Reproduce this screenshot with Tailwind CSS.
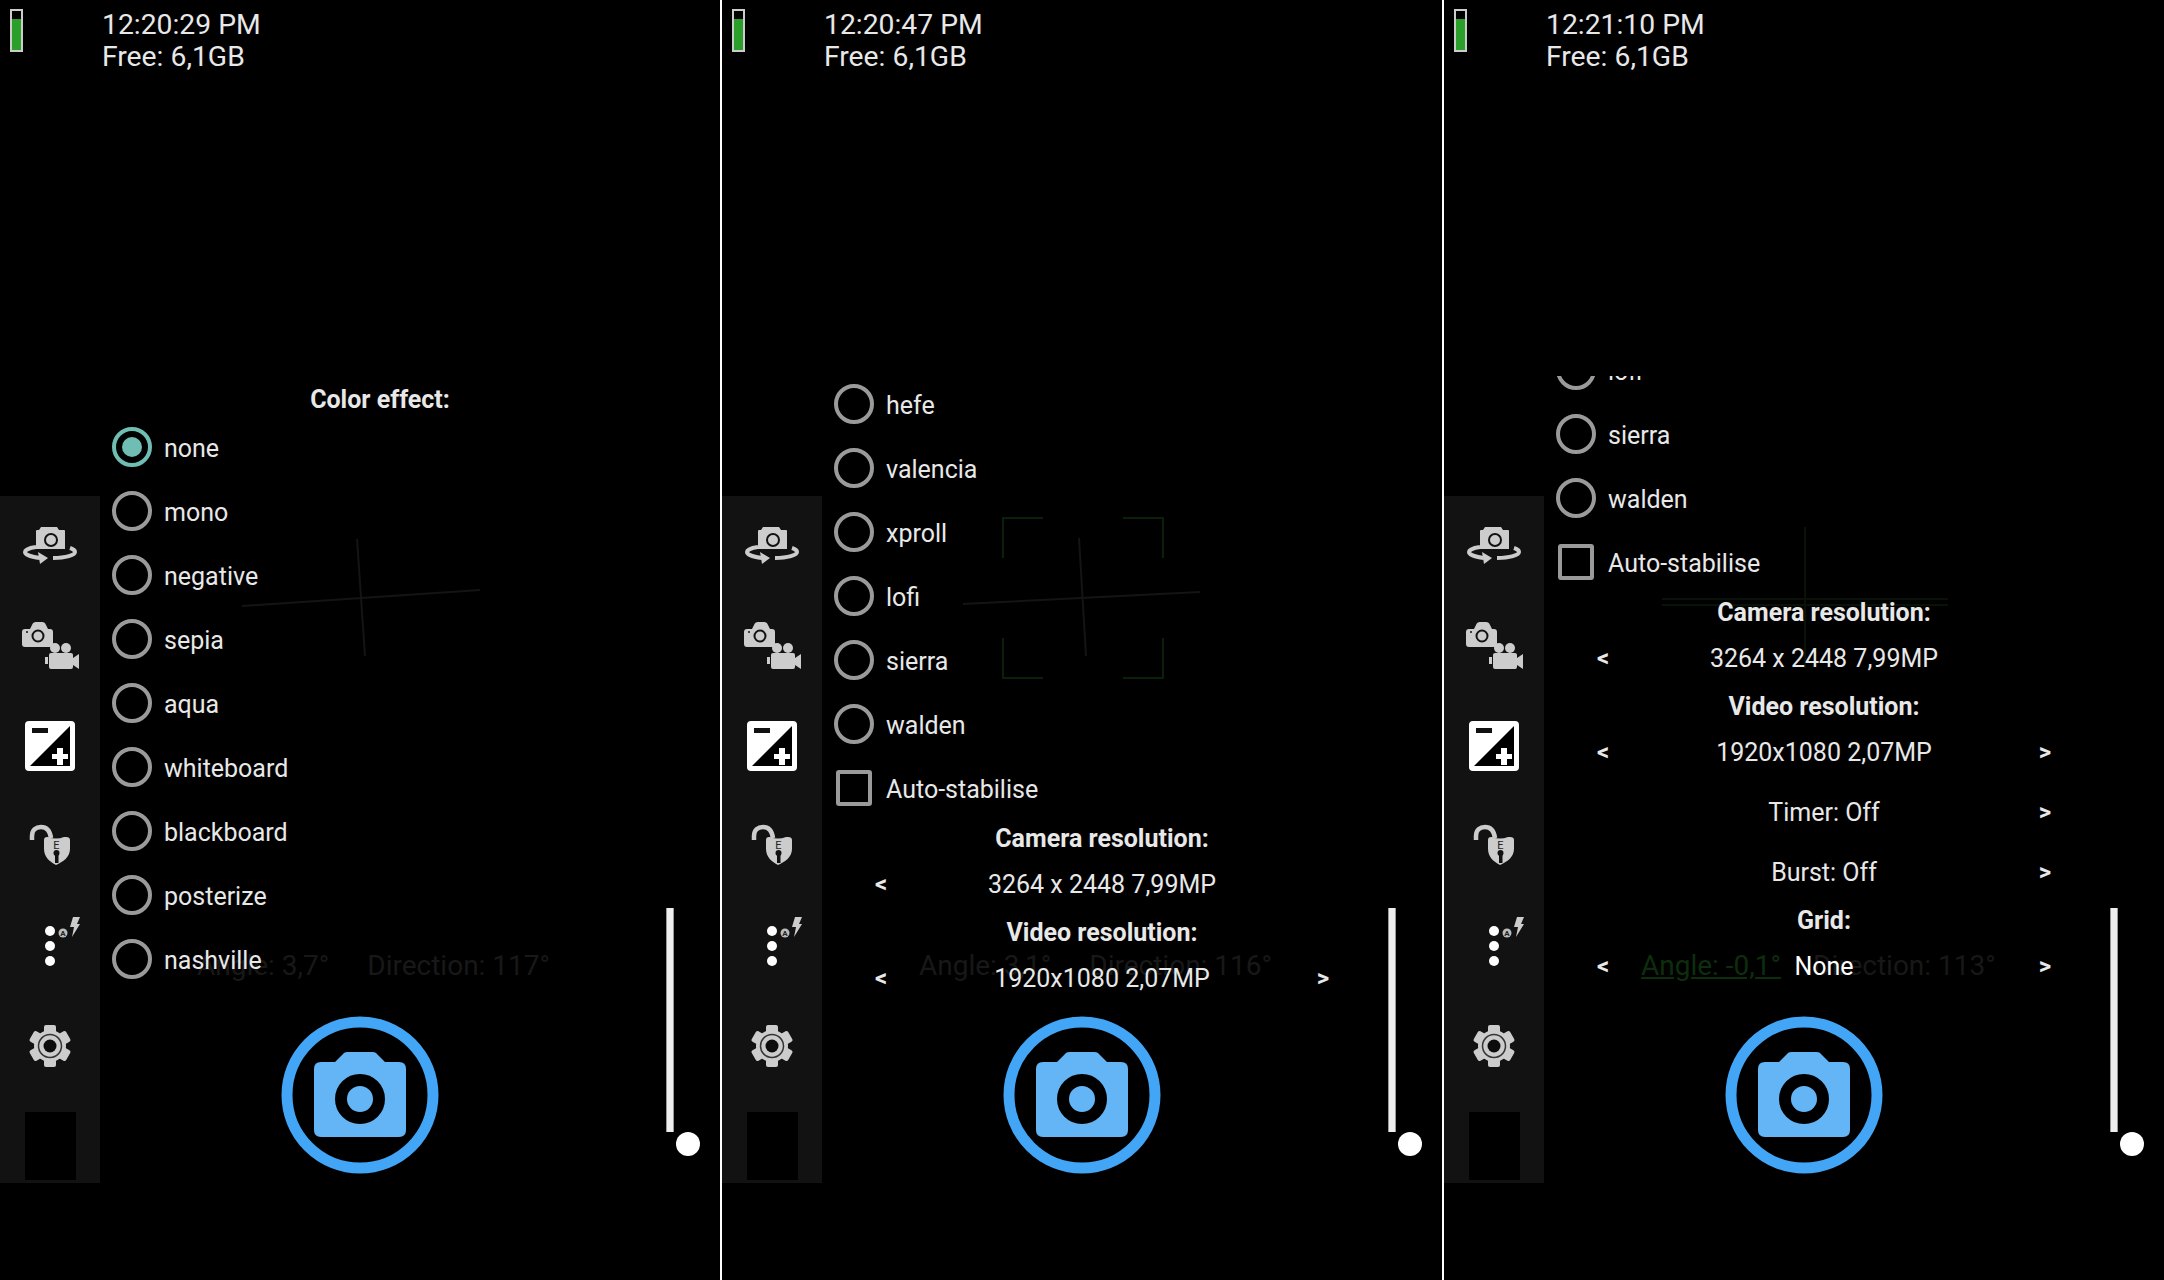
<!doctype html>
<html>
<head>
<meta charset="utf-8">
<script src="https://cdn.jsdelivr.net/npm/@tailwindcss/browser@4"></script>
</head>
<body class="bg-black">
<svg class="hidden" width="0" height="0">
  <symbol id="ic-switch" viewBox="0 0 100 100">
    <path d="M36 35q0-1 1-1h2l2-3h16l2 3h5q1 0 1 1v18H36z" fill="#ccc"/>
    <circle cx="51" cy="44" r="6" fill="#ccc" stroke="#121212" stroke-width="2"/>
    <path d="M36 51c-7 1-11 3-11 5 0 3 7 5 15 6" fill="none" stroke="#ccc" stroke-width="4"/>
    <path d="M38 56l10 6-8 6z" fill="#ccc"/>
    <path d="M53 62c13 0 22-3 22-6 0-2-2-3-5-4" fill="none" stroke="#ccc" stroke-width="4"/>
  </symbol>
  <symbol id="ic-mode" viewBox="0 0 100 100">
    <path d="M25 33h5l2-4q1-3 4-3h6q3 0 4 3l2 4h2q3 0 3 3v12q0 3-3 3H25q-3 0-3-3V36q0-3 3-3z" fill="#ccc"/>
    <circle cx="38" cy="40" r="5.500" fill="#ccc" stroke="#121212" stroke-width="2"/>
    <circle cx="27" cy="36" r="1" fill="#121212"/>
    <circle cx="55" cy="52" r="5" fill="#ccc"/>
    <circle cx="66" cy="52" r="5" fill="#ccc"/>
    <path d="M51 57h20q2 0 2 2v3l6-4v15l-6-4v2q0 2-2 2H51q-2 0-2-2V59q0-2 2-2z" fill="#ccc"/>
    <rect x="45" y="61" width="3" height="7" fill="#ccc"/>
  </symbol>
  <symbol id="ic-exposure" viewBox="0 0 100 100">
    <rect x="25" y="25" width="50" height="50" rx="4" fill="#fff"/>
    <path d="M70 30v40H30z" fill="#000"/>
    <rect x="32" y="32" width="16" height="5" fill="#111"/>
    <rect x="52" y="58" width="16" height="5" fill="#fff"/>
    <rect x="57" y="52" width="6" height="17" fill="#fff"/>
  </symbol>
  <symbol id="ic-lock" viewBox="0 0 100 100">
    <path d="M32 44v-4c0-6 4-9 9-9 6 0 9 4 10 11" fill="none" stroke="#ccc" stroke-width="4.500"/>
    <path d="M44 44q0-3 3-3h1q8 3 16 0h2q4 0 4 3v9c0 8-7 13-14 16-6-3-12-8-12-16z" fill="#ccc"/>
    <text x="56.500" y="53" text-anchor="middle" font-family="Roboto" font-size="11" fill="#222">E</text>
    <circle cx="56.500" cy="57" r="3" fill="#111"/>
    <rect x="55" y="57" width="3.500" height="10" fill="#111"/>
  </symbol>
  <symbol id="ic-more" viewBox="0 0 100 100">
    <circle cx="50" cy="35" r="5" fill="#fff"/>
    <circle cx="50" cy="50" r="5" fill="#fff"/>
    <circle cx="50" cy="65" r="5" fill="#fff"/>
    <circle cx="63" cy="37" r="4.500" fill="#bbb"/>
    <text x="63" y="40" text-anchor="middle" font-family="Roboto" font-weight="700" font-size="8" fill="#222">A</text>
    <path d="M73 21h7l-3 7h3l-8 13 2-10h-4z" fill="#ccc"/>
  </symbol>
  <symbol id="ic-gear" viewBox="0 0 100 100">
    <g fill="#ccc">
      <circle cx="50" cy="50" r="16"/>
      <rect x="44" y="29" width="12" height="42" rx="2"/>
      <rect x="44" y="29" width="12" height="42" rx="2" transform="rotate(60 50 50)"/>
      <rect x="44" y="29" width="12" height="42" rx="2" transform="rotate(120 50 50)"/>
    </g>
    <circle cx="50" cy="50" r="11.500" fill="none" stroke="#333" stroke-width="1.500"/>
    <circle cx="50" cy="50" r="6.500" fill="#0c0c0c"/>
  </symbol>
  <symbol id="ic-shutter" viewBox="0 0 158 158">
    <circle cx="79" cy="79" r="73" fill="none" stroke="#42a5f5" stroke-width="11"/>
    <path d="M40 46h14l9-9q1-1 4-1h24q3 0 4 1l9 9h14q7 0 7 7v61q0 7-7 7H40q-7 0-7-7V53q0-7 7-7z" fill="#64b5f6"/>
    <circle cx="79" cy="83" r="19" fill="#64b5f6" stroke="#000" stroke-width="12"/>
  </symbol>
</svg>

<div class="flex w-[2164px] h-[1280px] overflow-hidden [font-family:Roboto,sans-serif] text-[#e8e8e8]">

  <!-- left shot -->
  <section class="relative w-[720px] h-[1280px] shrink-0 bg-black">
    <svg class="absolute inset-0" width="720" height="1280">
      <path d="M242 606 480 590M357 539l8 117" stroke="#141414" stroke-width="2" fill="none"/>
    </svg>
    <div class="absolute left-[197px] top-[946px] flex gap-[38px] text-[28px] leading-10 text-[#181818]"><span>Angle: 3,7°</span><span>Direction: 117°</span></div>

    <header class="relative flex h-[496px] items-start">
      <div class="mt-[9px] ml-[10px] flex h-[43px] w-[13px] flex-col justify-end border-2 border-[#ccc] bg-black"><div class="h-[31px] bg-[#2aa02a]"></div></div>
      <div class="ml-[79px] mt-[9px] text-[28.3px] leading-[32px]"><p>12:20:29 PM</p><p>Free: 6,1GB</p></div>
    </header>
    <div class="relative flex h-[687px] items-start">
      <nav class="flex h-full w-[100px] flex-col bg-[#121212]">
        <svg class="size-[100px]"><use href="#ic-switch"/></svg>
        <svg class="size-[100px]"><use href="#ic-mode"/></svg>
        <svg class="size-[100px]"><use href="#ic-exposure"/></svg>
        <svg class="size-[100px]"><use href="#ic-lock"/></svg>
        <svg class="size-[100px]"><use href="#ic-more"/></svg>
        <svg class="size-[100px]"><use href="#ic-gear"/></svg>
        <div class="ml-[25px] mt-4 h-[68px] w-[51px] bg-black"></div>
      </nav>
      <svg class="ml-[181px] mt-[520px] size-[158px]"><use href="#ic-shutter"/></svg>
      <div class="ml-[227px] mt-[412px] h-[224px] w-2 border-x border-[#999] bg-[#eee]"></div>
      <div class="ml-[2px] mt-[636px] size-6 rounded-full bg-white"></div>
    </div>

    <div class="absolute left-[100px] top-[381px] w-[560px] text-[25px]">
      <h3 class="h-[34px] text-center font-bold leading-[38px]">Color effect:</h3>
      <div class="flex h-16 items-center gap-[12px] pl-3"><span class="flex size-10 items-center justify-center rounded-full border-4 border-[#6fbdb3]"><span class="size-5 rounded-full bg-[#6fbdb3]"></span></span><span class="pt-[3px]">none</span></div>
      <div class="flex h-16 items-center gap-[12px] pl-3"><span class="size-10 rounded-full border-4 border-[#9a9a9a]"></span><span class="pt-[3px]">mono</span></div>
      <div class="flex h-16 items-center gap-[12px] pl-3"><span class="size-10 rounded-full border-4 border-[#9a9a9a]"></span><span class="pt-[3px]">negative</span></div>
      <div class="flex h-16 items-center gap-[12px] pl-3"><span class="size-10 rounded-full border-4 border-[#9a9a9a]"></span><span class="pt-[3px]">sepia</span></div>
      <div class="flex h-16 items-center gap-[12px] pl-3"><span class="size-10 rounded-full border-4 border-[#9a9a9a]"></span><span class="pt-[3px]">aqua</span></div>
      <div class="flex h-16 items-center gap-[12px] pl-3"><span class="size-10 rounded-full border-4 border-[#9a9a9a]"></span><span class="pt-[3px]">whiteboard</span></div>
      <div class="flex h-16 items-center gap-[12px] pl-3"><span class="size-10 rounded-full border-4 border-[#9a9a9a]"></span><span class="pt-[3px]">blackboard</span></div>
      <div class="flex h-16 items-center gap-[12px] pl-3"><span class="size-10 rounded-full border-4 border-[#9a9a9a]"></span><span class="pt-[3px]">posterize</span></div>
      <div class="flex h-16 items-center gap-[12px] pl-3"><span class="size-10 rounded-full border-4 border-[#9a9a9a]"></span><span class="pt-[3px]">nashville</span></div>
    </div>
  </section>

  <div class="w-[2px] shrink-0 bg-white"></div>

  <!-- middle shot -->
  <section class="relative w-[720px] h-[1280px] shrink-0 bg-black">
    <svg class="absolute inset-0" width="720" height="1280">
      <path d="M241 604 478 592M357 538l7 118" stroke="#141414" stroke-width="2" fill="none"/>
      <path d="M281 558v-40h40M401 518h40v40M281 638v40h40M401 678h40v-40" stroke="#0a200a" stroke-width="2" fill="none"/>
    </svg>
    <div class="absolute left-[197px] top-[946px] flex gap-[38px] text-[28px] leading-10 text-[#181818]"><span>Angle: 3,1°</span><span>Direction: 116°</span></div>

    <header class="relative flex h-[496px] items-start">
      <div class="mt-[9px] ml-[10px] flex h-[43px] w-[13px] flex-col justify-end border-2 border-[#ccc] bg-black"><div class="h-[31px] bg-[#2aa02a]"></div></div>
      <div class="ml-[79px] mt-[9px] text-[28.3px] leading-[32px]"><p>12:20:47 PM</p><p>Free: 6,1GB</p></div>
    </header>
    <div class="relative flex h-[687px] items-start">
      <nav class="flex h-full w-[100px] flex-col bg-[#121212]">
        <svg class="size-[100px]"><use href="#ic-switch"/></svg>
        <svg class="size-[100px]"><use href="#ic-mode"/></svg>
        <svg class="size-[100px]"><use href="#ic-exposure"/></svg>
        <svg class="size-[100px]"><use href="#ic-lock"/></svg>
        <svg class="size-[100px]"><use href="#ic-more"/></svg>
        <svg class="size-[100px]"><use href="#ic-gear"/></svg>
        <div class="ml-[25px] mt-4 h-[68px] w-[51px] bg-black"></div>
      </nav>
      <svg class="ml-[181px] mt-[520px] size-[158px]"><use href="#ic-shutter"/></svg>
      <div class="ml-[227px] mt-[412px] h-[224px] w-2 border-x border-[#999] bg-[#eee]"></div>
      <div class="ml-[2px] mt-[636px] size-6 rounded-full bg-white"></div>
    </div>

    <div class="absolute left-[100px] top-[372px] w-[560px] text-[25px]">
      <div class="flex h-16 items-center gap-[12px] pl-3"><span class="size-10 rounded-full border-4 border-[#9a9a9a]"></span><span class="pt-[3px]">hefe</span></div>
      <div class="flex h-16 items-center gap-[12px] pl-3"><span class="size-10 rounded-full border-4 border-[#9a9a9a]"></span><span class="pt-[3px]">valencia</span></div>
      <div class="flex h-16 items-center gap-[12px] pl-3"><span class="size-10 rounded-full border-4 border-[#9a9a9a]"></span><span class="pt-[3px]">xproll</span></div>
      <div class="flex h-16 items-center gap-[12px] pl-3"><span class="size-10 rounded-full border-4 border-[#9a9a9a]"></span><span class="pt-[3px]">lofi</span></div>
      <div class="flex h-16 items-center gap-[12px] pl-3"><span class="size-10 rounded-full border-4 border-[#9a9a9a]"></span><span class="pt-[3px]">sierra</span></div>
      <div class="flex h-16 items-center gap-[12px] pl-3"><span class="size-10 rounded-full border-4 border-[#9a9a9a]"></span><span class="pt-[3px]">walden</span></div>
      <div class="flex h-16 items-center gap-[12px] pl-[14px]"><span class="mr-[2px] size-9 rounded-[3px] border-4 border-[#9a9a9a]"></span><span class="pt-[3px]">Auto-stabilise</span></div>
      <h3 class="h-[34px] text-center font-bold leading-[38px]">Camera resolution:</h3>
      <div class="grid h-[60px] grid-cols-[118px_324px_118px] items-center text-center"><b class="text-[24px]">&lt;</b><span class="pt-[2px]">3264 x 2448 7,99MP</span><span></span></div>
      <h3 class="h-[34px] text-center font-bold leading-[38px]">Video resolution:</h3>
      <div class="grid h-[60px] grid-cols-[118px_324px_118px] items-center text-center"><b class="text-[24px]">&lt;</b><span class="pt-[2px]">1920x1080 2,07MP</span><b class="text-[24px]">&gt;</b></div>
    </div>
  </section>

  <div class="w-[2px] shrink-0 bg-white"></div>

  <!-- right shot -->
  <section class="relative w-[720px] h-[1280px] shrink-0 bg-black">
    <svg class="absolute inset-0" width="720" height="1280">
      <path d="M218 599H504M218 605H504M361 527V668" stroke="#081208" stroke-width="2" fill="none"/>
    </svg>
    <div class="absolute left-[197px] top-[946px] flex gap-[32px] text-[28px] leading-10"><span class="text-[#0d2e0d] underline underline-offset-2">Angle: -0,1°</span><span class="text-[#181818]">Direction: 113°</span></div>

    <header class="relative flex h-[496px] items-start">
      <div class="mt-[9px] ml-[10px] flex h-[43px] w-[13px] flex-col justify-end border-2 border-[#ccc] bg-black"><div class="h-[31px] bg-[#2aa02a]"></div></div>
      <div class="ml-[79px] mt-[9px] text-[28.3px] leading-[32px]"><p>12:21:10 PM</p><p>Free: 6,1GB</p></div>
    </header>
    <div class="relative flex h-[687px] items-start">
      <nav class="flex h-full w-[100px] flex-col bg-[#121212]">
        <svg class="size-[100px]"><use href="#ic-switch"/></svg>
        <svg class="size-[100px]"><use href="#ic-mode"/></svg>
        <svg class="size-[100px]"><use href="#ic-exposure"/></svg>
        <svg class="size-[100px]"><use href="#ic-lock"/></svg>
        <svg class="size-[100px]"><use href="#ic-more"/></svg>
        <svg class="size-[100px]"><use href="#ic-gear"/></svg>
        <div class="ml-[25px] mt-4 h-[68px] w-[51px] bg-black"></div>
      </nav>
      <svg class="ml-[181px] mt-[520px] size-[158px]"><use href="#ic-shutter"/></svg>
      <div class="ml-[227px] mt-[412px] h-[224px] w-2 border-x border-[#999] bg-[#eee]"></div>
      <div class="ml-[2px] mt-[636px] size-6 rounded-full bg-white"></div>
    </div>

    <div class="absolute left-[100px] top-[376px] h-[630px] w-[560px] overflow-hidden text-[25px]">
      <div class="-mt-[38px]">
        <div class="flex h-16 items-center gap-[12px] pl-3"><span class="size-10 rounded-full border-4 border-[#9a9a9a]"></span><span class="pt-[3px]">lofi</span></div>
        <div class="flex h-16 items-center gap-[12px] pl-3"><span class="size-10 rounded-full border-4 border-[#9a9a9a]"></span><span class="pt-[3px]">sierra</span></div>
        <div class="flex h-16 items-center gap-[12px] pl-3"><span class="size-10 rounded-full border-4 border-[#9a9a9a]"></span><span class="pt-[3px]">walden</span></div>
        <div class="flex h-16 items-center gap-[12px] pl-[14px]"><span class="mr-[2px] size-9 rounded-[3px] border-4 border-[#9a9a9a]"></span><span class="pt-[3px]">Auto-stabilise</span></div>
        <h3 class="h-[34px] text-center font-bold leading-[38px]">Camera resolution:</h3>
        <div class="grid h-[60px] grid-cols-[118px_324px_118px] items-center text-center"><b class="text-[24px]">&lt;</b><span class="pt-[2px]">3264 x 2448 7,99MP</span><span></span></div>
        <h3 class="h-[34px] text-center font-bold leading-[38px]">Video resolution:</h3>
        <div class="grid h-[60px] grid-cols-[118px_324px_118px] items-center text-center"><b class="text-[24px]">&lt;</b><span class="pt-[2px]">1920x1080 2,07MP</span><b class="text-[24px]">&gt;</b></div>
        <div class="grid h-[60px] grid-cols-[118px_324px_118px] items-center text-center"><span></span><span class="pt-[2px]">Timer: Off</span><b class="text-[24px]">&gt;</b></div>
        <div class="grid h-[60px] grid-cols-[118px_324px_118px] items-center text-center"><span></span><span class="pt-[2px]">Burst: Off</span><b class="text-[24px]">&gt;</b></div>
        <h3 class="h-[34px] text-center font-bold leading-[38px]">Grid:</h3>
        <div class="grid h-[60px] grid-cols-[118px_324px_118px] items-center text-center"><b class="text-[24px]">&lt;</b><span class="pt-[2px] text-white">None</span><b class="text-[24px]">&gt;</b></div>
      </div>
    </div>
  </section>
</div>
</body>
</html>
